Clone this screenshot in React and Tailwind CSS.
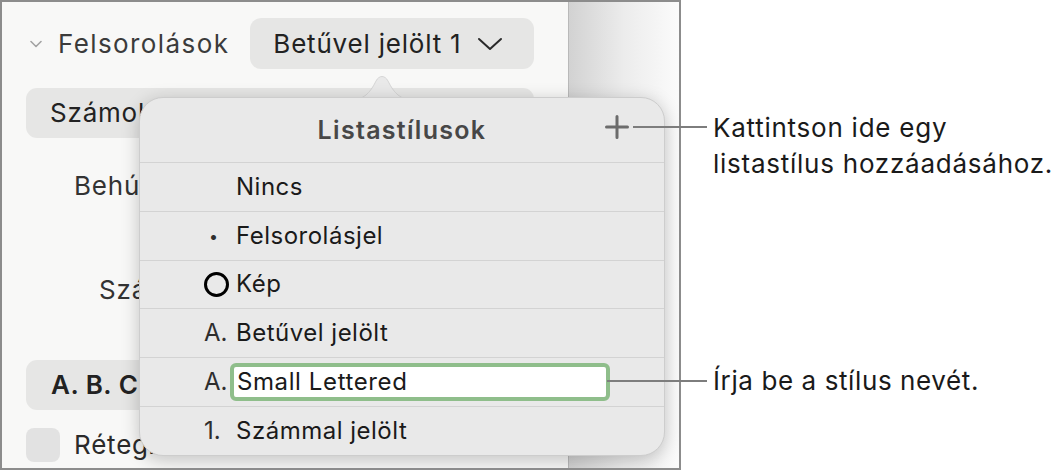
import React from "react";

const font = { fontFamily: "Inter, 'Noto Sans', sans-serif" };

function Row({ marker, children }) {
  return (
    <div className="flex h-[49px] items-center border-t border-[#d3d3d3] pl-[64px]">
      <div className="flex w-[32px] items-center text-[24px] leading-[30px] text-[#2e2e2e]">{marker}</div>
      <div className="text-[24px] leading-[30px] tracking-[0.5px] text-[#1a1a1a]">{children}</div>
    </div>
  );
}

export default function App() {
  return (
    <div className="relative h-[471px] w-[1061px] overflow-hidden bg-white" style={font}>
      {/* screenshot frame */}
      <div className="relative flex h-[470px] w-[681px] overflow-hidden border-2 border-[#8c8c8c]">
        {/* sidebar */}
        <div className="flex w-[566px] flex-col bg-[#f8f8f7] pl-[24px] pr-[34px] pt-[16px]">
          <div className="flex h-[51px] items-center">
            <svg width="12" height="8" viewBox="0 0 12 8" className="ml-[4px]">
              <path d="M1 1.5 L6 6.5 L11 1.5" fill="none" stroke="#a3a3a3" strokeWidth="1.6" strokeLinecap="round" strokeLinejoin="round" />
            </svg>
            <span className="ml-[16px] text-[26px] leading-[30px] tracking-[1.4px] text-[#3b3b3b]">Felsorolások</span>
            <div className="ml-[21px] flex h-[51px] flex-1 items-center rounded-[11px] bg-[#e6e6e5] pl-[23px]">
              <span className="text-[26px] leading-[30px] tracking-[0.8px] text-[#222]">Betűvel jelölt 1</span>
              <svg width="26" height="14" viewBox="0 0 26 14" className="ml-[16px]">
                <path d="M2 2 L13 12 L24 2" fill="none" stroke="#2a2a2a" strokeWidth="2" strokeLinecap="round" strokeLinejoin="round" />
              </svg>
            </div>
          </div>
          <div className="mt-[19px] flex h-[50px] items-center rounded-[11px] bg-[#e6e6e5] pl-[24px]">
            <span className="text-[26px] leading-[30px] tracking-[0.8px] text-[#222]">Számok</span>
          </div>
          <div className="mt-[33px] pl-[48px] text-[26px] leading-[30px] tracking-[0.8px] text-[#333]">Behúzás</div>
          <div className="mt-[74px] pl-[73px] text-[26px] leading-[30px] tracking-[0.8px] text-[#333]">Számozás</div>
          <div className="mt-[55px] flex h-[50px] items-center rounded-[11px] bg-[#e6e6e5] pl-[25px]">
            <span className="text-[26px] font-semibold leading-[30px] tracking-[0.5px] text-[#222]">A. B. C</span>
          </div>
          <div className="mt-[18px] flex items-center">
            <div className="h-[34px] w-[34px] rounded-[8px] bg-[#e2e2e2]" />
            <span className="ml-[14px] text-[26px] leading-[30px] tracking-[0.8px] text-[#2a2a2a]">Rétegzett számok</span>
          </div>
        </div>
        <div className="w-[1px] bg-[#b9b9b9]" />
        <div className="flex-1 bg-gradient-to-r from-[#d2d2d2] via-[#ececec] to-[#fbfbfb]" />

        {/* popover arrow */}
        <svg className="absolute left-[348px] top-[71px]" width="64" height="28" viewBox="0 0 64 28">
          <path d="M0 27 C14 27 20 20 26 8 C29 2 35 2 38 8 C44 20 50 27 64 27 Z" fill="#e9e9e9" stroke="#cfcfcf" strokeWidth="0.8" />
        </svg>
        {/* popover */}
        <div className="absolute left-[137px] top-[95px] flex h-[359px] w-[526px] flex-col rounded-[24px] border border-[#cdcdcd] bg-[#e9e9e9] shadow-[0_4px_18px_rgba(0,0,0,0.22)]">
          <div className="relative flex h-[64px] items-center justify-center">
            <span className="text-[25px] font-semibold leading-[30px] tracking-[1.3px] text-[#474747]">Listastílusok</span>
            <svg className="absolute left-[465px] top-[17px]" width="24" height="24" viewBox="0 0 24 24">
              <path d="M12 1.5 V22.5 M1.5 12 H22.5" stroke="#6c6c6c" strokeWidth="3" strokeLinecap="round" />
            </svg>
          </div>
          <Row marker={null}>Nincs</Row>
          <Row marker={<span className="ml-[5px] text-[16px]">•</span>}>Felsorolásjel</Row>
          <Row marker={<div className="h-[25px] w-[25px] rounded-full border-[3.5px] border-black" />}>Kép</Row>
          <Row marker={<span>A.</span>}>Betűvel jelölt</Row>
          <div className="flex h-[49px] items-center border-t border-[#d3d3d3] pl-[64px]">
            <div className="w-[26px] text-[24px] leading-[30px] text-[#2e2e2e]">A.</div>
            <div className="flex h-[38px] w-[380px] items-center rounded-[6px] border-[4px] border-[#8fbe8b] bg-white pl-[3px]">
              <span className="text-[24px] leading-[30px] tracking-[0.6px] text-[#1a1a1a]">Small Lettered</span>
            </div>
          </div>
          <Row marker={<span>1.</span>}>Számmal jelölt</Row>
        </div>
      </div>

      {/* callouts */}
      <div className="absolute left-[633px] top-[126px] h-[2px] w-[74px] bg-[#7d7d7d]" />
      <div className="absolute left-[713px] top-[110px] text-[26px] leading-[36px] tracking-[0.75px] text-[#1a1a1a]">
        <div>Kattintson ide egy</div>
        <div>listastílus hozzáadásához.</div>
      </div>
      <div className="absolute left-[607px] top-[380px] h-[2px] w-[100px] bg-[#7d7d7d]" />
      <div className="absolute left-[713px] top-[363px] text-[26px] leading-[36px] tracking-[0.6px] text-[#1a1a1a]">
        Írja be a stílus nevét.
      </div>
    </div>
  );
}
